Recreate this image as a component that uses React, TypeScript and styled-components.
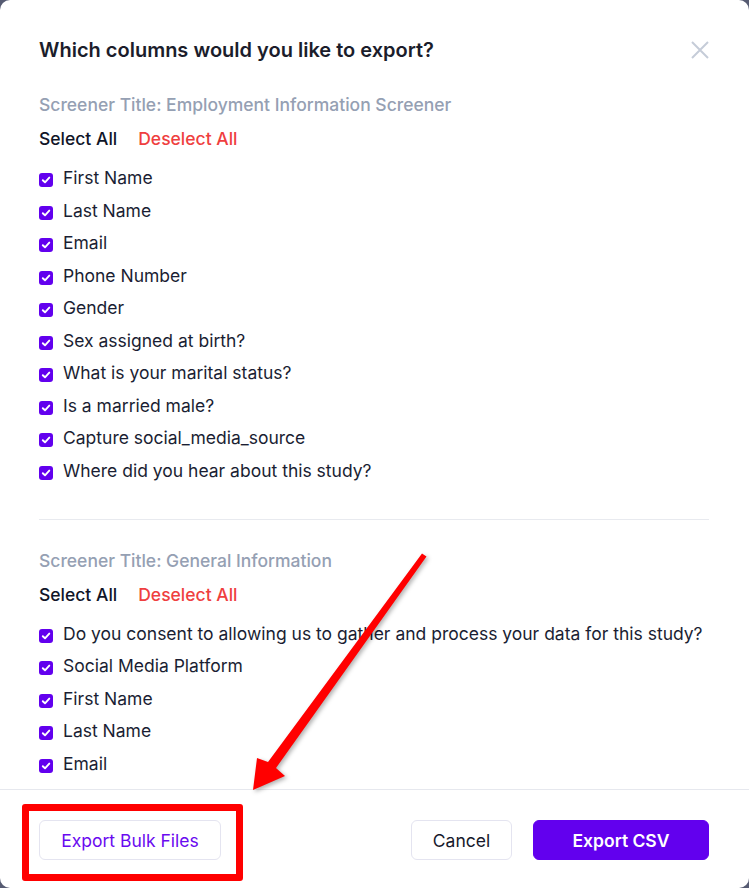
import React from "react";
import styled, { createGlobalStyle } from "styled-components";

const Global = createGlobalStyle`
  html, body { margin: 0; padding: 0; background: #565b72; }
  body { font-family: Inter, "Noto Sans", sans-serif; }
  * { box-sizing: border-box; }
`;

const Modal = styled.div`
  position: relative;
  width: 749px;
  height: 888px;
  background: #ffffff;
  border-radius: 10px;
  display: flex;
  flex-direction: column;
  overflow: hidden;
`;

const Body = styled.div`
  flex: 1;
  overflow: hidden;
  padding: 36px 40px 0 39px;
`;

const Header = styled.div`
  display: flex;
  justify-content: space-between;
  align-items: center;
  margin-bottom: 29px;
`;

const Title = styled.h2`
  margin: 0;
  font-size: 20px;
  line-height: 28px;
  font-weight: 600;
  color: #1b1d2b;
`;

const CloseButton = styled.button`
  border: 0;
  background: none;
  padding: 0;
  margin-right: 0;
  display: flex;
  cursor: pointer;
`;

const Section = styled.section``;

const SectionTitle = styled.div`
  font-size: 17.5px;
  line-height: 24px;
  font-weight: 500;
  color: #95a0b3;
  margin-bottom: 10px;
`;

const Actions = styled.div`
  display: flex;
  gap: 21px;
  margin-bottom: 15px;
`;

const LinkButton = styled.button<{ $danger?: boolean }>`
  border: 0;
  background: none;
  padding: 0;
  font-family: inherit;
  font-size: 17.5px;
  line-height: 24px;
  font-weight: 500;
  color: ${(p) => (p.$danger ? "#ef3f3f" : "#101528")};
  cursor: pointer;
`;

const List = styled.div`
  display: flex;
  flex-direction: column;
  gap: 8.5px;
`;

const Row = styled.label`
  display: flex;
  align-items: center;
  gap: 10px;
  font-size: 17.5px;
  line-height: 24px;
  color: #1a1e33;
`;

const Box = styled.span`
  width: 14px;
  height: 14px;
  border-radius: 3px;
  background: #6200ee;
  display: flex;
  align-items: center;
  justify-content: center;
  flex-shrink: 0;
  margin-top: 4px;
`;

const Divider = styled.hr`
  border: 0;
  border-top: 1px solid #e8eaef;
  margin: 36px 0 29px 0;
`;

const Footer = styled.div`
  border-top: 1px solid #e6e8ee;
  height: 99px;
  padding: 30px 40px 0 39px;
  display: flex;
  align-items: flex-start;
  justify-content: space-between;
  flex-shrink: 0;
`;

const Right = styled.div`
  display: flex;
  gap: 21px;
`;

const Button = styled.button<{ $variant: "ghost" | "outline" | "primary"; $w: number }>`
  height: 40px;
  width: ${(p) => p.$w}px;
  border-radius: 6px;
  font-family: inherit;
  font-size: 17.5px;
  line-height: 22px;
  padding-top: 2px;
  font-weight: ${(p) => (p.$variant === "primary" ? 600 : 400)};
  border: 1px solid ${(p) => (p.$variant === "primary" ? "#6200ee" : "#e4e4f0")};
  background: ${(p) => (p.$variant === "primary" ? "#6200ee" : "#ffffff")};
  color: ${(p) =>
    p.$variant === "primary" ? "#ffffff" : p.$variant === "ghost" ? "#6a0af0" : "#16192b"};
  cursor: pointer;
`;

const Highlight = styled.div`
  position: absolute;
  left: 22px;
  top: 804px;
  width: 221px;
  height: 77px;
  border: 7px solid #ff0000;
  border-radius: 3px;
  pointer-events: none;
`;

const Arrow = styled.svg`
  position: absolute;
  left: 0;
  top: 0;
  pointer-events: none;
  filter: drop-shadow(2px 2px 2px rgba(0, 0, 0, 0.3));
`;

const Check = () => (
  <svg width="10" height="10" viewBox="0 0 10 10">
    <path d="M1.8 5.2 L4 7.3 L8.3 2.6" fill="none" stroke="#fff" strokeWidth="1.9" strokeLinecap="round" strokeLinejoin="round" />
  </svg>
);

const sections = [
  {
    title: "Screener Title: Employment Information Screener",
    items: [
      "First Name",
      "Last Name",
      "Email",
      "Phone Number",
      "Gender",
      "Sex assigned at birth?",
      "What is your marital status?",
      "Is a married male?",
      "Capture social_media_source",
      "Where did you hear about this study?",
    ],
  },
  {
    title: "Screener Title: General Information",
    items: [
      "Do you consent to allowing us to gather and process your data for this study?",
      "Social Media Platform",
      "First Name",
      "Last Name",
      "Email",
      "Phone Number",
      "Gender",
    ],
  },
];

export default function App() {
  return (
    <>
      <Global />
      <Modal>
        <Body>
          <Header>
            <Title>Which columns would you like to export?</Title>
            <CloseButton aria-label="Close">
              <svg width="18" height="18" viewBox="0 0 18 18">
                <path d="M1 1 L17 17 M17 1 L1 17" stroke="#c5ccd8" strokeWidth="2" />
              </svg>
            </CloseButton>
          </Header>
          {sections.map((s, i) => (
            <Section key={i}>
              {i > 0 && <Divider />}
              <SectionTitle>{s.title}</SectionTitle>
              <Actions>
                <LinkButton>Select All</LinkButton>
                <LinkButton $danger>Deselect All</LinkButton>
              </Actions>
              <List>
                {s.items.map((it, j) => (
                  <Row key={j}>
                    <Box>
                      <Check />
                    </Box>
                    {it}
                  </Row>
                ))}
              </List>
            </Section>
          ))}
        </Body>
        <Footer>
          <Button $variant="ghost" $w={182}>Export Bulk Files</Button>
          <Right>
            <Button $variant="outline" $w={101}>Cancel</Button>
            <Button $variant="primary" $w={176}>Export CSV</Button>
          </Right>
        </Footer>
        <Highlight />
        <Arrow width="749" height="888" viewBox="0 0 749 888">
          <polygon
            points="422,553.5 426.5,556.5 276,768 285,776 253,790 257,758 268,762"
            fill="#ff0000"
          />
        </Arrow>
      </Modal>
    </>
  );
}
